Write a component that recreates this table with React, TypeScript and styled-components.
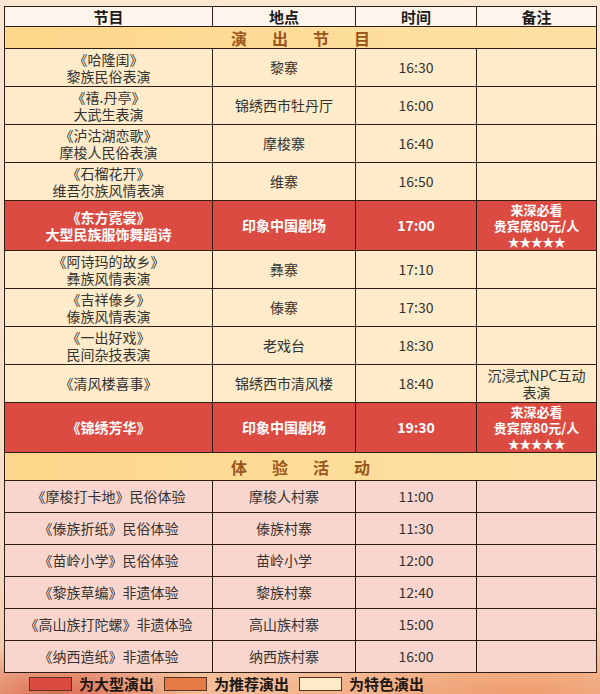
import React from "react";
import styled, { createGlobalStyle, css } from "styled-components";

const GlobalStyle = createGlobalStyle`
  html, body {
    margin: 0;
    padding: 0;
  }
  body {
    font-family: "Noto Sans CJK SC", "Noto Sans", sans-serif;
  }
`;

type Variant = "normal" | "big" | "exp";

const Page = styled.div`
  width: 600px;
  height: 694px;
  box-sizing: border-box;
  padding: 6px 4px 0 4px;
  display: flex;
  flex-direction: column;
  overflow: hidden;
  background:
    radial-gradient(ellipse 140px 60px at 60px 700px, #d9664c 0%, rgba(217, 102, 76, 0) 100%),
    radial-gradient(ellipse 220px 70px at 520px 700px, #ef9a6a 0%, rgba(239, 154, 106, 0) 100%),
    radial-gradient(ellipse 200px 40px at 300px 694px, #f4b58c 0%, rgba(244, 181, 140, 0) 100%),
    linear-gradient(180deg, #fbe6d3 0%, #f8dcc4 80%, #f3c2a0 100%);
`;

const Table = styled.table`
  width: 592px;
  border-collapse: collapse;
  table-layout: fixed;
  border: 1px solid #2f1e15;
`;

const HeadCell = styled.th`
  height: 19px;
  padding: 0;
  background: #fdf5ec;
  border: 1px solid #2f1e15;
  font-size: 15px;
  font-weight: 700;
  color: #1e1a18;
  line-height: 18px;
`;

const SectionCell = styled.td<{ $h: number }>`
  height: ${(p) => p.$h}px;
  padding: 0 0 0 25px;
  border: 1px solid #2f1e15;
  border-top-color: #8a6a4a;
  background: linear-gradient(90deg, #fcd68a 0%, #fddc98 50%, #fde1a4 100%);
  text-align: center;
  font-size: 16px;
  font-weight: 700;
  letter-spacing: 25px;
  color: #9a561c;
  line-height: 18px;
`;

const Row = styled.tr<{ $h: number }>`
  height: ${(p) => p.$h}px;
`;

const Cell = styled.td<{ $v: Variant }>`
  padding: 0;
  border: 1px solid #2f1e15;
  text-align: center;
  vertical-align: middle;
  font-size: 14px;
  line-height: 17px;
  color: #333;
  background: #fdebc9;
  ${(p) =>
    p.$v === "big" &&
    css`
      background: #dc4b42;
      color: #fff;
      font-weight: 700;
    `}
  ${(p) =>
    p.$v === "exp" &&
    css`
      background: #f9d6cd;
    `}
`;

const Note = styled.div`
  font-size: 13px;
  line-height: 16px;
  font-weight: 700;
  color: #fff;
`;

const Stars = styled.div`
  font-size: 12px;
  line-height: 16px;
  letter-spacing: -0.5px;
  color: #fff;
`;

const Legend = styled.div`
  display: flex;
  align-items: center;
  height: 21px;
  padding-left: 25px;
`;

const LegendItem = styled.div`
  display: flex;
  align-items: center;
  gap: 7px;
  margin-right: 10px;
`;

const Swatch = styled.span<{ $c: string }>`
  display: block;
  width: 43px;
  height: 14px;
  background: ${(p) => p.$c};
  border: 1px solid #5a3322;
  box-sizing: border-box;
`;

const LegendText = styled.span`
  font-size: 15px;
  font-weight: 700;
  color: #1d1612;
  line-height: 18px;
`;

type Perf = {
  title: string;
  sub?: string;
  place: string;
  time: string;
  note?: React.ReactNode;
  big?: boolean;
};

const bigNote = (
  <>
    <Note>来深必看</Note>
    <Note>贵宾席80元/人</Note>
    <Stars>★★★★★</Stars>
  </>
);

const shows: Perf[] = [
  { title: "《哈隆闺》", sub: "黎族民俗表演", place: "黎寨", time: "16:30" },
  { title: "《禧.丹亭》", sub: "大武生表演", place: "锦绣西市牡丹厅", time: "16:00" },
  { title: "《泸沽湖恋歌》", sub: "摩梭人民俗表演", place: "摩梭寨", time: "16:40" },
  { title: "《石榴花开》", sub: "维吾尔族风情表演", place: "维寨", time: "16:50" },
  { title: "《东方霓裳》", sub: "大型民族服饰舞蹈诗", place: "印象中国剧场", time: "17:00", note: bigNote, big: true },
  { title: "《阿诗玛的故乡》", sub: "彝族风情表演", place: "彝寨", time: "17:10" },
  { title: "《吉祥傣乡》", sub: "傣族风情表演", place: "傣寨", time: "17:30" },
  { title: "《一出好戏》", sub: "民间杂技表演", place: "老戏台", time: "18:30" },
  {
    title: "《清风楼喜事》",
    place: "锦绣西市清风楼",
    time: "18:40",
    note: (
      <>
        沉浸式NPC互动
        <br />
        表演
      </>
    ),
  },
  { title: "《锦绣芳华》", place: "印象中国剧场", time: "19:30", note: bigNote, big: true },
];

const experiences = [
  ["《摩梭打卡地》民俗体验", "摩梭人村寨", "11:00"],
  ["《傣族折纸》民俗体验", "傣族村寨", "11:30"],
  ["《苗岭小学》民俗体验", "苗岭小学", "12:00"],
  ["《黎族草编》非遗体验", "黎族村寨", "12:40"],
  ["《高山族打陀螺》非遗体验", "高山族村寨", "15:00"],
  ["《纳西造纸》非遗体验", "纳西族村寨", "16:00"],
];

const App = () => {
  return (
    <>
      <GlobalStyle />
      <Page>
        <Table>
          <colgroup>
            <col style={{ width: 208 }} />
            <col style={{ width: 143 }} />
            <col style={{ width: 121 }} />
            <col style={{ width: 120 }} />
          </colgroup>
          <thead>
            <tr>
              <HeadCell>节目</HeadCell>
              <HeadCell>地点</HeadCell>
              <HeadCell>时间</HeadCell>
              <HeadCell>备注</HeadCell>
            </tr>
          </thead>
          <tbody>
            <tr>
              <SectionCell colSpan={4} $h={21}>
                演出节目
              </SectionCell>
            </tr>
            {shows.map((s) => {
              const v: Variant = s.big ? "big" : "normal";
              return (
                <Row key={s.title} $h={s.big ? 50 : 38}>
                  <Cell $v={v}>
                    {s.title}
                    {s.sub && (
                      <>
                        <br />
                        {s.sub}
                      </>
                    )}
                  </Cell>
                  <Cell $v={v}>{s.place}</Cell>
                  <Cell $v={v}>{s.time}</Cell>
                  <Cell $v={v}>{s.note}</Cell>
                </Row>
              );
            })}
            <tr>
              <SectionCell colSpan={4} $h={27}>
                体验活动
              </SectionCell>
            </tr>
            {experiences.map(([name, place, time]) => (
              <Row key={name} $h={32}>
                <Cell $v="exp">{name}</Cell>
                <Cell $v="exp">{place}</Cell>
                <Cell $v="exp">{time}</Cell>
                <Cell $v="exp" />
              </Row>
            ))}
          </tbody>
        </Table>
        <Legend>
          <LegendItem>
            <Swatch $c="#dc4b42" />
            <LegendText>为大型演出</LegendText>
          </LegendItem>
          <LegendItem>
            <Swatch $c="#e57c45" />
            <LegendText>为推荐演出</LegendText>
          </LegendItem>
          <LegendItem>
            <Swatch $c="#fdebc9" />
            <LegendText>为特色演出</LegendText>
          </LegendItem>
        </Legend>
      </Page>
    </>
  );
};

export default App;
